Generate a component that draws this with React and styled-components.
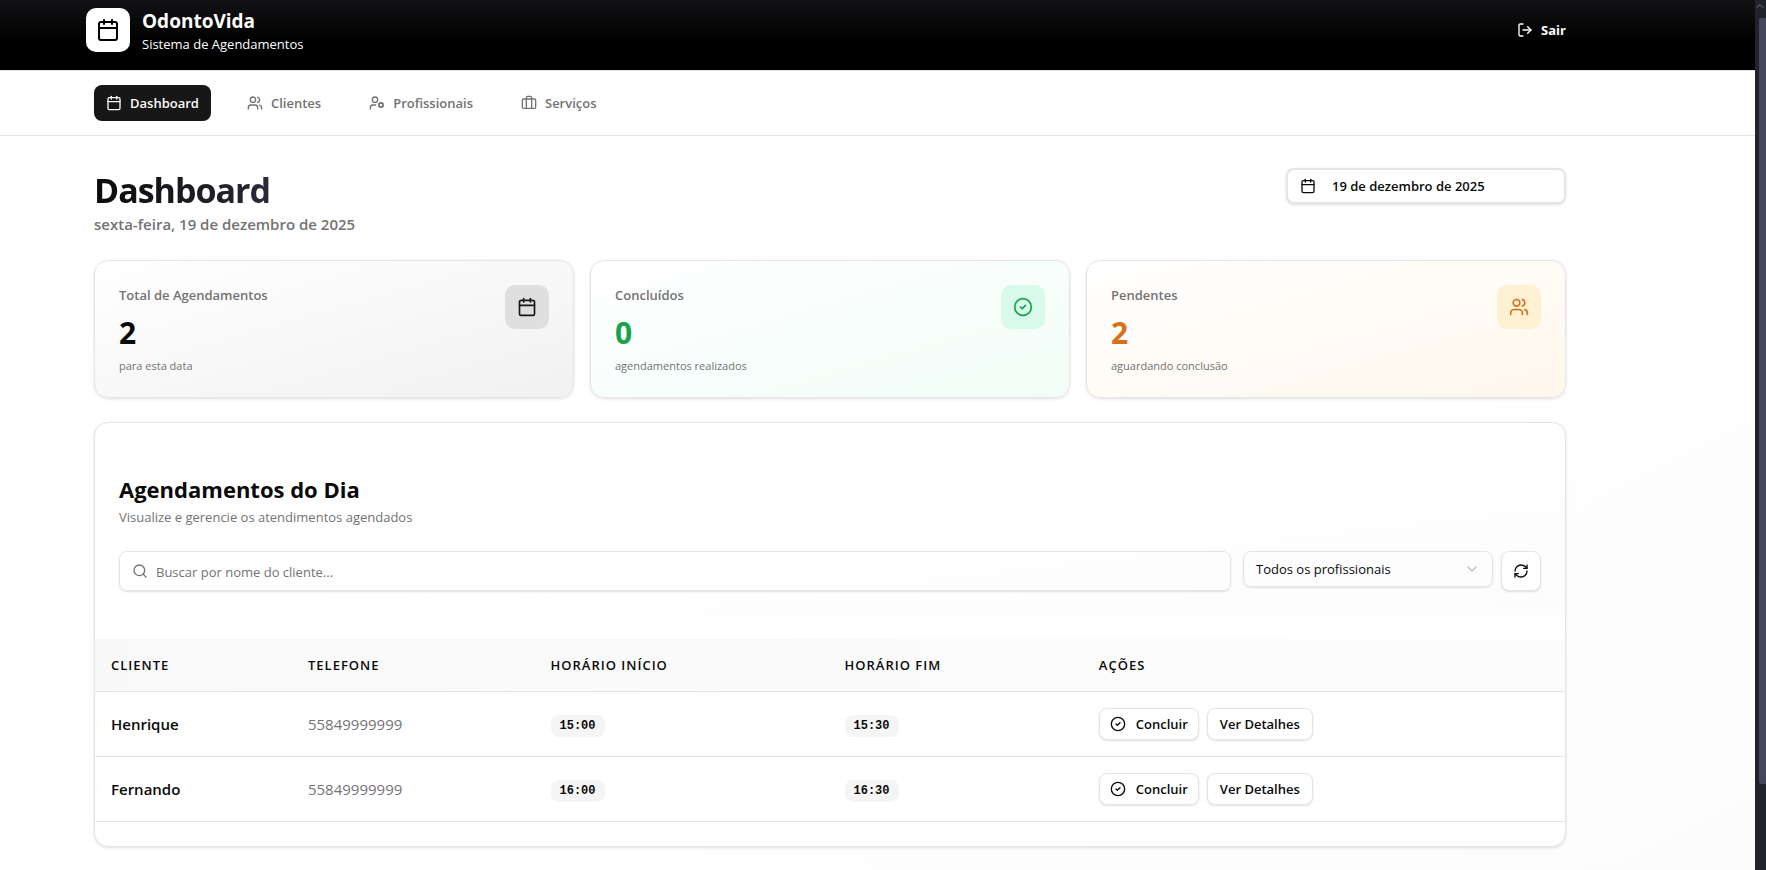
import React, { useState } from "react";
import styled, { createGlobalStyle } from "styled-components";
import {
  Calendar,
  Users,
  UserCog,
  LogOut,
  CircleCheck,
  Search,
  ChevronDown,
  ChevronUp,
  RefreshCw,
} from "lucide-react";

const appointments = [
  { id: 1, client: "Henrique", phone: "55849999999", start: "15:00", end: "15:30" },
  { id: 2, client: "Fernando", phone: "55849999999", start: "16:00", end: "16:30" },
];

// Suitcase with two straps, drawn on the same 24px grid as the other icons
const Suitcase = ({ size = 16 }) => (
  <svg
    width={size}
    height={size}
    viewBox="0 0 24 24"
    fill="none"
    stroke="currentColor"
    strokeWidth="2"
    strokeLinecap="round"
    strokeLinejoin="round"
    aria-hidden="true"
  >
    <path d="M16 20V4a2 2 0 0 0-2-2h-4a2 2 0 0 0-2 2v16" />
    <rect width="20" height="14" x="2" y="6" rx="2" />
  </svg>
);

const navItems = [
  { label: "Dashboard", icon: Calendar },
  { label: "Clientes", icon: Users },
  { label: "Profissionais", icon: UserCog },
  { label: "Serviços", icon: Suitcase },
];

const stats = [
  { label: "Total de Agendamentos", value: 2, note: "para esta data", icon: Calendar, tone: "neutral" },
  { label: "Concluídos", value: 0, note: "agendamentos realizados", icon: CircleCheck, tone: "green" },
  { label: "Pendentes", value: 2, note: "aguardando conclusão", icon: Users, tone: "amber" },
];

const App = () => {
  const [active, setActive] = useState("Dashboard");
  const [searchTerm, setSearchTerm] = useState("");

  const filtered = appointments.filter((item) =>
    item.client.toLowerCase().includes(searchTerm.toLowerCase())
  );

  return (
    <Shell>
      <GlobalStyle />
      <Page>
        <Header>
          <Brand>
            <Logo>
              <Calendar size={24} />
            </Logo>
            <div>
              <BrandName>OdontoVida</BrandName>
              <BrandText>Sistema de Agendamentos</BrandText>
            </div>
          </Brand>
          <LogoutButton type="button">
            <LogOut size={16} />
            Sair
          </LogoutButton>
        </Header>

        <Nav>
          {navItems.map(({ label, icon: Icon }) => (
            <NavLink
              key={label}
              href="#"
              $active={active === label}
              onClick={() => setActive(label)}
            >
              <Icon size={16} />
              {label}
            </NavLink>
          ))}
        </Nav>

        <Main>
          <TitleRow>
            <div>
              <Title>Dashboard</Title>
              <Subtitle>sexta-feira, 19 de dezembro de 2025</Subtitle>
            </div>
            <DateButton type="button">
              <Calendar size={16} />
              19 de dezembro de 2025
            </DateButton>
          </TitleRow>

          <Stats>
            {stats.map(({ label, value, note, icon: Icon, tone }) => (
              <StatCard key={label} $tone={tone}>
                <div>
                  <StatLabel>{label}</StatLabel>
                  <StatValue $tone={tone}>{value}</StatValue>
                  <StatNote>{note}</StatNote>
                </div>
                <StatIcon $tone={tone}>
                  <Icon size={20} />
                </StatIcon>
              </StatCard>
            ))}
          </Stats>

          <Panel>
            <PanelHeader>
              <PanelTitle>Agendamentos do Dia</PanelTitle>
              <PanelText>Visualize e gerencie os atendimentos agendados</PanelText>
              <Filters>
                <SearchBox>
                  <Search size={16} />
                  <input
                    type="text"
                    aria-label="Buscar por nome do cliente"
                    placeholder="Buscar por nome do cliente..."
                    value={searchTerm}
                    onChange={(e) => setSearchTerm(e.target.value)}
                  />
                </SearchBox>
                <FilterEnd>
                  <SelectBox>
                    <select aria-label="Profissional">
                      <option>Todos os profissionais</option>
                    </select>
                    <ChevronDown size={16} />
                  </SelectBox>
                  <RefreshButton type="button" aria-label="Atualizar">
                    <RefreshCw size={16} />
                  </RefreshButton>
                </FilterEnd>
              </Filters>
            </PanelHeader>

            <Table>
              <colgroup>
                <Col $width={13.4} />
                <Col $width={16.5} />
                <Col $width={20} />
                <Col $width={17.3} />
                <col />
              </colgroup>
              <thead>
                <tr>
                  <th>Cliente</th>
                  <th>Telefone</th>
                  <th>Horário Início</th>
                  <th>Horário Fim</th>
                  <th>Ações</th>
                </tr>
              </thead>
              <tbody>
                {filtered.map((item) => (
                  <tr key={item.id}>
                    <ClientCell>{item.client}</ClientCell>
                    <PhoneCell>{item.phone}</PhoneCell>
                    <td>
                      <Time>{item.start}</Time>
                    </td>
                    <td>
                      <Time>{item.end}</Time>
                    </td>
                    <td>
                      <Actions>
                        <ActionButton type="button" $withIcon>
                          <CircleCheck size={16} />
                          Concluir
                        </ActionButton>
                        <ActionButton type="button">Ver Detalhes</ActionButton>
                      </Actions>
                    </td>
                  </tr>
                ))}
              </tbody>
            </Table>
          </Panel>
        </Main>
      </Page>

      <ScrollTrack aria-hidden="true">
        <ChevronUp size={12} />
        <ScrollThumb />
      </ScrollTrack>
    </Shell>
  );
};

const tones = {
  neutral: { text: "#0a0a0a", icon: "#171717", box: "#dfdfdf", end: "#f1f1f1" },
  green: { text: "#16a34a", icon: "#16a34a", box: "#d9f9eb", end: "#f1fdf7" },
  amber: { text: "#d6711a", icon: "#d6711a", box: "#fef0d3", end: "#fff7ec" },
};

const GlobalStyle = createGlobalStyle`
  * {
    box-sizing: border-box;
  }

  body {
    margin: 0;
    overflow: hidden;
    font-family: "Open Sans", "Noto Sans", sans-serif;
    font-size: 14px;
    line-height: 20px;
    color: #0a0a0a;
  }

  h1, h2, p {
    margin: 0;
  }

  button, input, select {
    font: inherit;
    color: inherit;
  }

  svg {
    flex-shrink: 0;
  }
`;

const Shell = styled.div`
  display: flex;
  height: 100vh;
`;

const Page = styled.div`
  flex: 1;
  min-width: 0;
  background: linear-gradient(to bottom right, #ffffff 60%, #fcfcfc);
`;

/* Top bar */
const Header = styled.header`
  display: flex;
  justify-content: space-between;
  align-items: flex-start;
  height: 70px;
  padding: 8px 189px 0 86px;
  color: #fff;
  background: linear-gradient(to bottom, #121215, #000 60%);
`;

const Brand = styled.div`
  display: flex;
  gap: 12px;
`;

const Logo = styled.div`
  display: flex;
  align-items: center;
  justify-content: center;
  width: 44px;
  height: 44px;
  border-radius: 10px;
  color: #000;
  background: #fff;
`;

const BrandName = styled.h2`
  font-size: 19px;
  line-height: 26px;
  font-weight: 700;
`;

const BrandText = styled.p`
  font-size: 13px;
  line-height: 20px;
`;

const LogoutButton = styled.button`
  display: flex;
  align-items: center;
  gap: 8px;
  height: 44px;
  padding: 0;
  border: none;
  background: none;
  font-size: 13px;
  font-weight: 700;
  cursor: pointer;
`;

/* Navigation */
const Nav = styled.nav`
  display: flex;
  gap: 24px;
  padding: 14px 189px 14px 94px;
  border-top: 1px solid #e5e5e5;
  border-bottom: 1px solid #e5e5e5;
  background: #fff;
`;

const NavLink = styled.a`
  display: flex;
  align-items: center;
  gap: 8px;
  height: 36px;
  padding: 0 12px;
  border-radius: 8px;
  font-size: 13px;
  font-weight: 600;
  text-decoration: none;
  color: ${({ $active }) => ($active ? "#fafafa" : "#737373")};
  background: ${({ $active }) => ($active ? "#171717" : "transparent")};
`;

/* Content */
const Main = styled.main`
  padding: 32px 189px 24px 94px;
`;

const TitleRow = styled.div`
  display: flex;
  justify-content: space-between;
  align-items: flex-start;
  margin-bottom: 24px;
`;

const Title = styled.h1`
  width: fit-content;
  font-size: 34px;
  line-height: 44px;
  font-weight: 700;
  letter-spacing: -1px;
  color: transparent;
  background: linear-gradient(to right, #0a0a0a, #1a1a1f 50%, #2a2a3c);
  background-clip: text;
`;

const Subtitle = styled.p`
  font-size: 15px;
  line-height: 24px;
  font-weight: 600;
  color: #737373;
`;

const DateButton = styled.button`
  display: flex;
  align-items: center;
  gap: 16px;
  width: 280px;
  height: 36px;
  padding: 0 12px;
  border: 2px solid #e5e5e5;
  border-radius: 8px;
  background: #fff;
  font-size: 13px;
  font-weight: 600;
  box-shadow: 0 1px 3px rgba(0, 0, 0, 0.12);
`;

const Stats = styled.section`
  display: grid;
  grid-template-columns: repeat(3, 1fr);
  gap: 16px;
  margin-bottom: 24px;
`;

const StatCard = styled.article`
  display: flex;
  justify-content: space-between;
  align-items: flex-start;
  padding: 24px;
  border: 1px solid #e5e5e5;
  border-radius: 14px;
  background: linear-gradient(to bottom right, #ffffff, ${({ $tone }) => tones[$tone].end});
  box-shadow: 0 1px 3px rgba(0, 0, 0, 0.12);
`;

const StatLabel = styled.p`
  font-size: 13px;
  line-height: 20px;
  font-weight: 600;
  color: #737373;
`;

const StatValue = styled.p`
  margin: 10px 0 8px;
  font-size: 30px;
  line-height: 36px;
  font-weight: 700;
  color: ${({ $tone }) => tones[$tone].text};
`;

const StatNote = styled.p`
  font-size: 11px;
  line-height: 14px;
  color: #737373;
`;

const StatIcon = styled.div`
  display: flex;
  padding: 12px;
  border-radius: 10px;
  color: ${({ $tone }) => tones[$tone].icon};
  background: ${({ $tone }) => tones[$tone].box};
`;

/* Appointments panel */
const Panel = styled.section`
  padding: 24px 0;
  border: 1px solid #e5e5e5;
  border-radius: 14px;
  background: #fff;
  box-shadow: 0 1px 3px rgba(0, 0, 0, 0.12);
`;

const PanelHeader = styled.div`
  margin-bottom: 24px;
  padding: 24px;
  background: linear-gradient(to bottom right, #ffffff 50%, #fcfcfc);
`;

const PanelTitle = styled.h2`
  font-size: 22px;
  line-height: 36px;
  font-weight: 700;
`;

const PanelText = styled.p`
  font-size: 13px;
  line-height: 20px;
  color: #737373;
`;

const Filters = styled.div`
  display: flex;
  gap: 12px;
  margin-top: 24px;
`;

const SearchBox = styled.label`
  display: flex;
  flex: 1;
  align-items: center;
  gap: 8px;
  height: 40px;
  padding: 0 12px;
  border: 1px solid #e5e5e5;
  border-radius: 8px;
  color: #737373;
  box-shadow: 0 1px 2px rgba(0, 0, 0, 0.12);

  input {
    flex: 1;
    padding: 2px 0 0;
    border: none;
    outline: none;
    background: transparent;
    font-size: 13px;
  }

  input::placeholder {
    color: #737373;
  }
`;

const FilterEnd = styled.div`
  display: flex;
  gap: 8px;
`;

const SelectBox = styled.div`
  display: grid;
  align-items: center;
  width: 250px;
  height: 36px;
  border: 1px solid #e5e5e5;
  border-radius: 8px;
  box-shadow: 0 1px 2px rgba(0, 0, 0, 0.12);

  select,
  svg {
    grid-area: 1 / 1;
  }

  select {
    height: 34px;
    padding: 0 12px;
    border: none;
    outline: none;
    appearance: none;
    background: transparent;
    font-size: 13px;
  }

  svg {
    justify-self: end;
    margin-right: 12px;
    color: #c0c0c0;
    pointer-events: none;
  }
`;

const RefreshButton = styled.button`
  display: flex;
  align-items: center;
  justify-content: center;
  width: 40px;
  height: 40px;
  padding: 0;
  border: 1px solid #e5e5e5;
  border-radius: 8px;
  background: #fff;
  box-shadow: 0 1px 2px rgba(0, 0, 0, 0.12);
`;

const Table = styled.table`
  width: 100%;
  table-layout: fixed;
  border-spacing: 0;

  th,
  td {
    padding: 16px;
    border-bottom: 1px solid #e5e5e5;
    text-align: left;
  }

  th {
    font-size: 13px;
    line-height: 20px;
    font-weight: 600;
    letter-spacing: 1px;
    text-transform: uppercase;
  }

  thead tr {
    background: linear-gradient(to right, #f9f9f9, #fcfcfc);
  }
`;

const Col = styled.col`
  width: ${({ $width }) => $width}%;
`;

const ClientCell = styled.td`
  font-size: 15px;
  font-weight: 600;
`;

const PhoneCell = styled.td`
  font-size: 15px;
  color: #737373;
`;

const Time = styled.span`
  display: inline-block;
  margin-top: 4px;
  padding: 3px 9px;
  border-radius: 8px;
  background: #f5f5f5;
  font-family: "Liberation Mono", monospace;
  font-size: 12px;
  line-height: 16px;
  font-weight: 700;
  vertical-align: middle;
`;

const Actions = styled.div`
  display: flex;
  gap: 8px;
`;

const ActionButton = styled.button`
  display: flex;
  align-items: center;
  gap: 10px;
  height: 32px;
  padding: 0 ${({ $withIcon }) => ($withIcon ? "10px" : "12px")};
  border: 1px solid #e5e5e5;
  border-radius: 8px;
  background: #fff;
  font-size: 13px;
  font-weight: 600;
  box-shadow: 0 1px 2px rgba(0, 0, 0, 0.12);
`;

/* Window scrollbar */
const ScrollTrack = styled.div`
  display: flex;
  flex-direction: column;
  align-items: flex-end;
  width: 11px;
  color: #6b6e85;
  background: #21222c;
`;

const ScrollThumb = styled.div`
  width: 7px;
  height: 88%;
  margin-top: 6px;
  border-radius: 2px 0 0 2px;
  background: #44475a;
`;

export default App;
